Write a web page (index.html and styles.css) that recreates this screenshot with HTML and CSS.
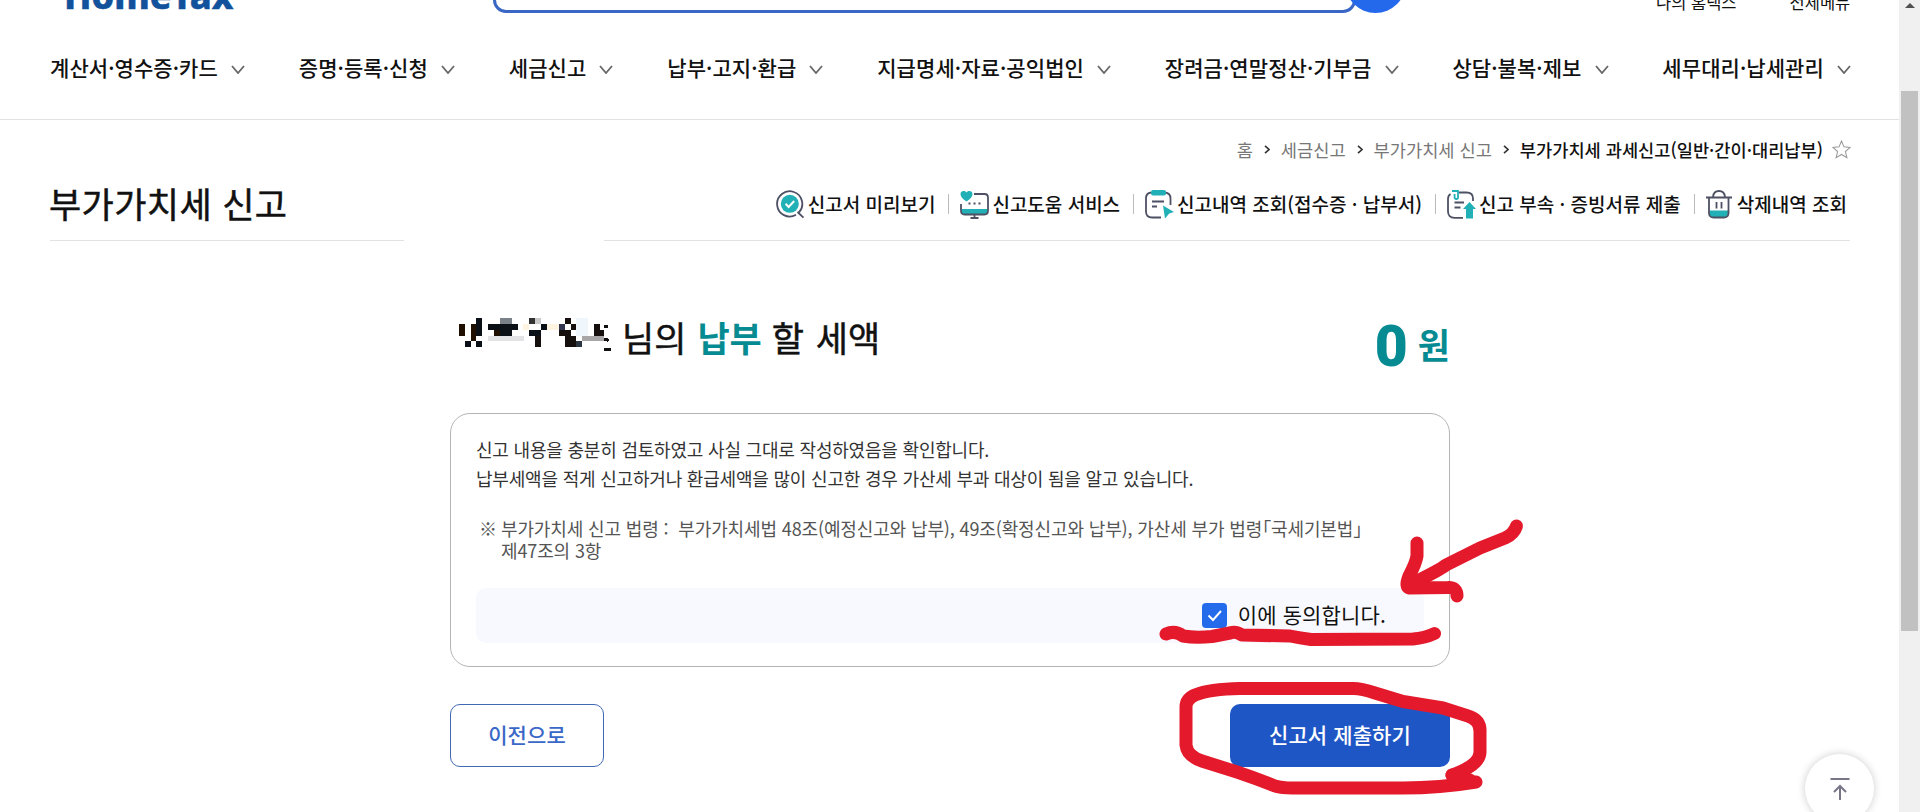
FILE: index.html
```html
<!DOCTYPE html>
<html lang="ko">
<head>
    <meta charset="UTF-8">
    <meta name="viewport" content="width=device-width, initial-scale=1.0">
    <title>부가가치세 신고</title>
    <link rel="stylesheet" href="styles.css">
</head>
<body>
    <div class="page">
        <header class="header">
            <div class="header-top">
                <div class="logo">HomeTax</div>
                <div class="search"></div>
                <div class="search-btn"></div>
                <div class="util">
                    <span>나의 홈택스</span>
                    <span>전체메뉴</span>
                </div>
            </div>
            <nav class="gnb">
                <a>계산서·영수증·카드<svg class="chev" viewBox="0 0 14 9"><path d="M1 1l6 7 6-7"/></svg></a>
                <a>증명·등록·신청<svg class="chev" viewBox="0 0 14 9"><path d="M1 1l6 7 6-7"/></svg></a>
                <a>세금신고<svg class="chev" viewBox="0 0 14 9"><path d="M1 1l6 7 6-7"/></svg></a>
                <a>납부·고지·환급<svg class="chev" viewBox="0 0 14 9"><path d="M1 1l6 7 6-7"/></svg></a>
                <a>지급명세·자료·공익법인<svg class="chev" viewBox="0 0 14 9"><path d="M1 1l6 7 6-7"/></svg></a>
                <a>장려금·연말정산·기부금<svg class="chev" viewBox="0 0 14 9"><path d="M1 1l6 7 6-7"/></svg></a>
                <a>상담·불복·제보<svg class="chev" viewBox="0 0 14 9"><path d="M1 1l6 7 6-7"/></svg></a>
                <a>세무대리·납세관리<svg class="chev" viewBox="0 0 14 9"><path d="M1 1l6 7 6-7"/></svg></a>
            </nav>
        </header>

        <div class="breadcrumb">
            <span>홈</span>
            <svg class="arr" viewBox="0 0 6 9"><path d="M1 .8l4 3.7-4 3.7"/></svg>
            <span>세금신고</span>
            <svg class="arr" viewBox="0 0 6 9"><path d="M1 .8l4 3.7-4 3.7"/></svg>
            <span>부가가치세 신고</span>
            <svg class="arr" viewBox="0 0 6 9"><path d="M1 .8l4 3.7-4 3.7"/></svg>
            <span class="current">부가가치세 과세신고(일반·간이·대리납부)</span>
            <svg class="star" viewBox="0 0 18 18"><path d="M9 1l2.3 5.5 5.9.5-4.5 3.9 1.4 5.9L9 13.7l-5.1 3.1 1.4-5.9L.8 7l5.9-.5z"/></svg>
        </div>

        <div class="title-row">
            <h1>부가가치세 신고</h1>
            <div class="links">
                <a>
                    <svg class="ico" viewBox="0 0 29 29">
                        <path class="ln" d="M22.8 22.6A12.6 12.6 0 1 0 20 24.8M21.5 22l6 5.6"/>
                        <circle class="fl" cx="13.8" cy="13.8" r="9"/>
                        <path class="wh" d="M9.6 13.8l3 3.2 5.6-6"/>
                    </svg>신고서 미리보기
                </a>
                <a>
                    <svg class="ico" viewBox="0 0 29 29">
                        <path class="fl" d="M1.5 19h26v2.5q0 3-3 3h-20q-3 0-3-3z"/>
                        <path class="ln" d="M14 4h10.500q3.500 0 3.500 3.500v13q0 4-3.500 4h-20q-3.500 0-3.500-4V14M14.500 24.500v3M10.500 28h8"/>
                        <path class="fl" d="M6.500 11.500C3 9 .5 7 .5 4 .5 1 4.500 0 6.500 2.600 8.500 0 12.500 1 12.500 4c0 3-2.500 5-6 7.500z"/>
                        <path class="dk" d="M8.500 12.500h2v2h-2zM13.500 12.500h2v2h-2zM18.500 12.500h2v2h-2z"/>
                    </svg>신고도움 서비스
                </a>
                <a>
                    <svg class="ico" viewBox="0 0 29 29">
                        <path class="ln" d="M16 27.500H7q-6 0-6-6V8.500q0-5.500 5-6M20 2.500q5.500.5 5.500 6V15M7 11.500h12M7 16.500h5"/>
                        <rect class="fl" x="6" y="0" width="15" height="5.500" rx="2"/>
                        <path class="fl" d="M18 15.500l11 6.500-4.800 1.600-4.200 5z"/>
                    </svg>신고내역 조회(접수증 · 납부서)
                </a>
                <a>
                    <svg class="ico" viewBox="0 0 29 29">
                        <path class="ln" d="M16 27.800H7.500q-6.500 0-6.500-6.500V9q0-3.500 2.500-5M12 2.500h7.500q6.500 0 6.500 6V11M7.500 12.500H17M7.500 17.500h6"/>
                        <path class="tl" d="M5 1h6v6.500q0 1.500-1.700 1.500T7.600 7.500V4"/>
                        <path class="fl" d="M22.500 12l6.500 7h-3v9.500h-7V19h-3z"/>
                    </svg>신고 부속 · 증빙서류 제출
                </a>
                <a>
                    <svg class="ico ico-bin" viewBox="0 0 26 29">
                        <path class="fl" d="M3.500 20.500h18.500v3.500q-.5 4-4 4h-10.500q-3.500 0-4-4z"/>
                        <path class="ln" d="M0 7.500h26M7 7Q7.500 1 13 1t6 6M3 8v15.500q.5 4 4.500 4h10.500q4 0 4.500-4V8M10.500 12v6.500M15.500 12v6.500"/>
                    </svg>삭제내역 조회
                </a>
            </div>
        </div>
        <div class="rules"><i></i><i></i></div>

        <main class="content">
            <div class="amount">
                <svg class="mosaic" viewBox="0 0 510 150" shape-rendering="crispEdges">
                    <path fill="#eff7fc" d="M378 24h36v54h-36z"/>
                    <path fill="#fff4df" d="M291 42h36v18h-36zM220 42h17v18h-17z"/>
                    <path fill="#e3e3e5" d="M114 78h108v15H114z"/>
                    <path fill="#a8a6a6" d="M396 78h66v15h-66z"/>
                    <path fill="#7b8189" d="M150 24h36v18h-36z"/>
                    <path fill="#c9c9ca" d="M255 24h18v18h-18z"/>
                    <path fill="#333" d="M237 24h18v18h-18z"/>
                    <path fill="#323650" d="M327 42h18v18h-18z"/>
                    <path fill="#2b3640" d="M378 93h18v18h-18z"/>
                    <path fill="#1f0f00" d="M27 42h18v36H27zM63 42h15v51H63zM132 59h18v19h-18z"/>
                    <path fill="#0b1016" d="M78 24h18v54H78zM45 93h18v18H45zM78 93h18v18H78zM114 42h90v17h-90zM150 59h36v19h-36zM273 42h18v18h-18zM237 60h36v18h-36z"/>
                    <path fill="#15100d" d="M255 78h18v32h-18zM345 24h18v18h-18zM363 42h15v18h-15zM327 60h36v18h-36zM345 78h33v33h-33zM432 42h18v18h-18zM432 60h30v18h-30z"/>
                    <path fill="#101010" d="M462 45h13v9h-13zM462 83h9l7 8-4 5-12-5zM462 114h21v9h-21z"/>
                </svg>
                <div class="label">
                    <span class="who">님의</span>
                    <b>납부</b>
                    <span class="what">할 세액</span>
                </div>
                <div class="won"><strong>0</strong><em>원</em></div>
            </div>

            <section class="agree-box">
                <p>신고 내용을 충분히 검토하였고 사실 그대로 작성하였음을 확인합니다.<br>납부세액을 적게 신고하거나 환급세액을 많이 신고한 경우 가산세 부과 대상이 됨을 알고 있습니다.</p>
                <div class="note">
                    <span class="mark">※</span>
                    <span>부가가치세 신고 법령 :&nbsp; 부가가치세법 48조(예정신고와 납부), 49조(확정신고와 납부), 가산세 부가 법령「국세기본법」<br>제47조의 3항</span>
                </div>
                <div class="agree">
                    <span class="check"><svg viewBox="0 0 25 25"><path d="M6.500 12.500l4.500 4.500 8-9"/></svg></span>
                    <span class="agree-text">이에 동의합니다.</span>
                </div>
            </section>

            <div class="buttons">
                <button type="button" class="btn-prev">이전으로</button>
                <button type="button" class="btn-submit">신고서 제출하기</button>
            </div>
        </main>
    </div>

    <div class="to-top">
        <svg viewBox="0 0 20 24"><path d="M.5 2h19M10 23V9M4 15l6-6 6 6"/></svg>
    </div>

    <div class="scrollbar">
        <div class="scroll-up"></div>
        <div class="thumb"></div>
    </div>

    <!-- red pen marks -->
    <svg class="pen" viewBox="0 0 1920 812">
        <path d="M1516.500 526Q1514 534 1505 538L1480 548 1446 565Q1440 570 1409 585"/>
        <path d="M1417 543V556Q1416 563 1409 576 1405 586 1409 588L1448 587.500Q1457 587 1457 596"/>
        <path d="M1166 634Q1175 630 1183 636 1195 638 1212 636.500L1230 633Q1236 631 1242 635L1290 636Q1300 638 1311 639.500L1413 639Q1425 638 1434.500 633.500"/>
        <path d="M1452 775Q1480 765 1480 752V733Q1481 720 1468 716L1443 708 1403 701.500 1375 693Q1360 688 1352 688.500L1240 688.500Q1210 689 1195 695 1186 699 1186 707V745Q1187 756 1202 761L1237 772Q1255 778 1275 786 1282 788 1292 788H1403Q1440 788 1476 782"/>
        <path d="M1452 775L1470 780"/>
    </svg>
</body>
</html>
```
FILE: styles.css
```css
* {
    box-sizing: border-box;
}
body {
    margin: 0;
    width: 1920px;
    height: 812px;
    overflow: hidden;
    background-color: #fff;
    color: #111;
    font-family: "Noto Sans CJK KR", sans-serif;
}
svg {
    display: block;
    flex: none;
    fill: none;
}
.page {
    width: 1899px;
}
.header {
    height: 120px;
    border-bottom: 1px solid #e1e1e1;
}
.header-top {
    display: flex;
    align-items: flex-end;
    height: 13px;
    padding-left: 64px;
}
.logo {
    width: 429px;
    margin-bottom: -7px;
    color: #12529c;
    font-family: "Noto Sans", sans-serif;
    font-size: 36px;
    font-weight: 800;
    line-height: 49px;
    -webkit-text-stroke: 0.5px #12529c;
}
.search {
    width: 863px;
    height: 60px;
    border: 3px solid #3a67c6;
    border-radius: 13px;
}
.search-btn {
    width: 61px;
    height: 61px;
    margin-left: -11px;
    border-radius: 50%;
    background-color: #2468ec;
}
.util {
    display: flex;
    gap: 53px;
    margin-left: 250px;
    margin-bottom: -1px;
    font-size: 16.500px;
    line-height: 24px;
}
.gnb {
    display: flex;
    justify-content: space-between;
    padding: 39px 48px 0 50px;
}
.gnb a {
    display: flex;
    align-items: center;
    gap: 13px;
    font-size: 21px;
    font-weight: 500;
    letter-spacing: 0.080px;
    line-height: 30px;
    white-space: nowrap;
}
.chev {
    width: 14px;
    height: 9px;
    margin-top: 4px;
    stroke: #666;
    stroke-width: 1.800;
}
.breadcrumb {
    display: flex;
    align-items: center;
    justify-content: flex-end;
    height: 26px;
    margin-top: 16px;
    padding-right: 48px;
    color: #777;
    font-size: 17.600px;
    white-space: nowrap;
}
.arr {
    width: 6px;
    height: 9px;
    margin: 0 11px;
    stroke: #333;
    stroke-width: 1.600;
}
.current {
    color: #111;
    font-weight: 500;
}
.star {
    width: 19px;
    height: 19px;
    margin-left: 9px;
    stroke: #999;
}
.title-row {
    display: flex;
    align-items: center;
    justify-content: space-between;
    height: 60px;
    margin-top: 12px;
    padding: 0 52px 0 49px;
}
h1 {
    margin: -3px 0 0;
    font-size: 35px;
    font-weight: 400;
    letter-spacing: 0.400px;
    line-height: 50px;
    -webkit-text-stroke: 0.5px #111;
}
.links {
    display: flex;
    align-items: center;
}
.links a {
    display: flex;
    align-items: center;
    gap: 3px;
    font-size: 19px;
    font-weight: 500;
    line-height: 28px;
    white-space: nowrap;
}
.links a + a::before {
    content: "";
    width: 1px;
    height: 20px;
    margin: 0 8px 0 13px;
    background-color: #bbb;
}
.ico {
    width: 29px;
    height: 29px;
}
.ico-bin {
    width: 26px;
    margin-right: 2px;
}
.ln {
    stroke: #4d5163;
    stroke-width: 1.800;
}
.fl {
    fill: #20b0b6;
}
.dk {
    fill: #4d5163;
}
.wh {
    stroke: #fff;
    stroke-width: 2;
}
.tl {
    stroke: #20b0b6;
    stroke-width: 1.800;
}
.rules {
    display: flex;
    justify-content: space-between;
    margin: 6px 49px 0 50px;
}
.rules i {
    width: 354px;
    height: 1px;
    background-color: #e2e2e2;
}
.rules i + i {
    width: 1246px;
}
.content {
    width: 1000px;
    margin-left: 450px;
}
.amount {
    display: flex;
    align-items: center;
    height: 172px;
    padding-top: 25px;
    font-size: 35px;
}
.mosaic {
    width: 170px;
    height: 50px;
    margin-top: -9px;
}
.label {
    display: flex;
    margin: -6px 0 0 2px;
    -webkit-text-stroke: 0.5px #111;
}
.label b {
    margin-left: 11px;
    color: #078b93;
    -webkit-text-stroke: 0;
}
.what {
    margin-left: 10px;
    word-spacing: 2px;
}
.won {
    display: flex;
    align-items: center;
    margin: 9px 0 0 auto;
    color: #078b93;
    font-weight: bold;
}
.won strong {
    margin-top: 5px;
    font-family: Roboto, sans-serif;
    font-size: 57px;
    line-height: 80px;
}
.won em {
    margin-left: 10px;
    font-size: 35px;
    font-style: normal;
    line-height: 50px;
}
.agree-box {
    height: 254px;
    padding: 21px 25px 0;
    border: 1px solid #b5b5b5;
    border-radius: 20px;
}
.agree-box p {
    margin: 0;
    color: #333;
    font-size: 18px;
    letter-spacing: -0.200px;
    line-height: 29px;
}
.note {
    display: flex;
    margin-top: 24px;
    color: #555;
    font-size: 18px;
    font-feature-settings: "halt";
    letter-spacing: -0.130px;
    line-height: 22px;
    white-space: nowrap;
}
.mark {
    width: 25px;
    padding-left: 3px;
}
.agree {
    display: flex;
    align-items: center;
    justify-content: flex-end;
    gap: 11px;
    height: 55px;
    margin-top: 27px;
    padding-right: 38px;
    border-radius: 10px;
    background-color: #f8f9fe;
    font-size: 21px;
}
.agree-text {
    margin-top: -4px;
    letter-spacing: 0.150px;
}
.check {
    width: 25px;
    height: 25px;
    border-radius: 4px;
    background-color: #246beb;
}
.check svg {
    stroke: #fff;
    stroke-width: 2;
}
.buttons {
    display: flex;
    justify-content: space-between;
    margin-top: 37px;
}
button {
    height: 63px;
    padding: 0 0 3px;
    border: none;
    border-radius: 10px;
    font-family: inherit;
    font-size: 21px;
    font-weight: 500;
    letter-spacing: 0.100px;
}
.btn-prev {
    width: 154px;
    border: 1px solid #3f69b2;
    background-color: #fff;
    color: #3a68c8;
}
.btn-submit {
    width: 220px;
    background-color: #1f56c6;
    color: #fff;
}
.to-top {
    position: absolute;
    left: 1805px;
    top: 754px;
    width: 69px;
    height: 69px;
    padding: 23px 0 0 25px;
    border-radius: 50%;
    background-color: #fff;
    box-shadow: 0 0 8px rgba(0, 0, 0, 0.2);
}
.to-top svg {
    width: 20px;
    height: 24px;
    stroke: #777588;
    stroke-width: 2;
}
.scrollbar {
    position: absolute;
    top: 0;
    right: 0;
    width: 21px;
    height: 812px;
    padding: 3px 2px 0;
    background-color: #f0f0f0;
}
.scroll-up {
    width: 10px;
    margin: 0 auto 83px;
    border: 5px solid transparent;
    border-top: none;
    border-bottom-color: #505050;
}
.thumb {
    height: 540px;
    background-color: #c1c1c1;
}
.pen {
    position: absolute;
    left: 0;
    top: 0;
    width: 1920px;
    height: 812px;
    stroke: #e4192b;
    stroke-width: 13;
    stroke-linecap: round;
    stroke-linejoin: round;
}
```
